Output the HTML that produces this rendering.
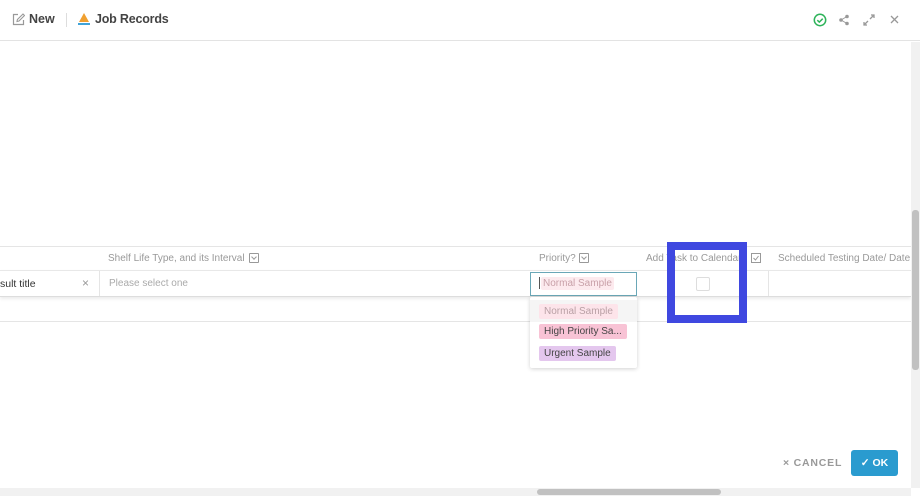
<!DOCTYPE html>
<html><head><style>
*{box-sizing:border-box;margin:0;padding:0}
body{width:920px;height:496px;background:#fff;font-family:"Liberation Sans",sans-serif;position:relative;overflow:hidden;color:#333}
.a{position:absolute}
.hdr{left:0;top:0;width:920px;height:41px;border-bottom:1px solid #e3e3e3;background:#fff}
.t{font-size:10px;color:#999;white-space:nowrap}
.tag{position:absolute;font-size:10.5px;padding:2px 5px;border-radius:2px;white-space:nowrap}
.dd{position:absolute;width:10px;height:10px;border:1px solid #999;border-radius:1px}
.dd:after{content:"";position:absolute;left:2px;top:1px;width:3px;height:3px;border-right:1px solid #999;border-bottom:1px solid #999;transform:rotate(45deg)}
</style></head><body>
<div class="a hdr"></div>
<svg class="a" style="left:12px;top:13px" width="13" height="13" viewBox="0 0 13 13"><path d="M6 1.5H1.5v10h10V7" fill="none" stroke="#999" stroke-width="1.2"/><path d="M5 8.5l.4-2L11 1l1.5 1.5L7 8z" fill="none" stroke="#999" stroke-width="1.1"/></svg>
<div class="a" style="left:29px;top:12px;font-size:12.5px;font-weight:bold;color:#444">New</div>
<div class="a" style="left:66px;top:13px;width:1px;height:14px;background:#ddd"></div>
<svg class="a" style="left:77px;top:12px" width="14" height="15" viewBox="0 0 14 15"><path d="M7 1L12 10H2z" fill="#f0a030"/><rect x="1" y="11" width="12" height="2" fill="#3fa3d8"/></svg>
<div class="a" style="left:95px;top:12px;font-size:12.5px;font-weight:bold;color:#444;letter-spacing:-.2px">Job Records</div>
<svg class="a" style="left:813px;top:13px" width="14" height="14" viewBox="0 0 14 14"><circle cx="7" cy="7" r="5.7" fill="none" stroke="#2eb35a" stroke-width="1.5"/><path d="M4.3 7.2l2 1.9 3.4-3.4" fill="none" stroke="#2eb35a" stroke-width="1.5"/></svg>
<svg class="a" style="left:838px;top:14px" width="12" height="12" viewBox="0 0 12 12"><circle cx="3" cy="6" r="1.8" fill="#999"/><circle cx="9" cy="2.5" r="1.8" fill="#999"/><circle cx="9" cy="9.5" r="1.8" fill="#999"/><path d="M3 6L9 2.5M3 6l6 3.5" stroke="#999"/></svg>
<svg class="a" style="left:863px;top:14px" width="12" height="12" viewBox="0 0 12 12"><path d="M7 5l4-4M8 1h3v3M5 7l-4 4M1 8v3h3" fill="none" stroke="#999" stroke-width="1.3"/></svg>
<svg class="a" style="left:890px;top:15px" width="9" height="9" viewBox="0 0 9 9"><path d="M1 1l7 7M8 1L1 8" stroke="#999" stroke-width="1.3"/></svg>
<div class="a" style="left:0;top:246px;width:911px;height:1px;background:#e5e5e5"></div>
<div class="a t" style="left:108px;top:253px">Shelf Life Type, and its Interval</div>
<div class="dd" style="left:249px;top:253px"></div>
<div class="a t" style="left:539px;top:253px">Priority?</div>
<div class="dd" style="left:579px;top:253px"></div>
<div class="a t" style="left:646px;top:253px">Add Task to Calendar</div>
<div class="a" style="left:751px;top:253px;width:10px;height:10px;border:1px solid #999"></div>
<svg class="a" style="left:752px;top:254px" width="8" height="8"><path d="M1.5 4l2 2 3-4" fill="none" stroke="#999"/></svg>
<div class="a t" style="left:778px;top:253px">Scheduled Testing Date/ Date</div>
<div class="a" style="left:0;top:270px;width:911px;height:27px;border-top:1px solid #e8e8e8;border-bottom:1px solid #ddd;box-shadow:0 2px 3px rgba(0,0,0,.08)"></div>
<div class="a" style="left:0;top:278px;font-size:10.5px;color:#333">sult title</div>
<div class="a" style="left:82px;top:276px;font-size:12px;color:#999">×</div>
<div class="a" style="left:99px;top:271px;width:1px;height:25px;background:#e5e5e5"></div>
<div class="a" style="left:109px;top:278px;font-size:10px;color:#aaa">Please select one</div>
<div class="a" style="left:768px;top:271px;width:1px;height:25px;background:#e5e5e5"></div>
<div class="a" style="left:530px;top:272px;width:107px;height:24px;border:1px solid #6aa7b7;background:#fff"></div>
<div class="a" style="left:539px;top:277px;width:1px;height:12px;background:#555"></div>
<div class="tag" style="left:541px;top:277px;background:#fdeaee;color:#c8a0a8;font-size:10px;padding:1px 2px">Normal Sample</div>
<div class="a" style="left:696px;top:277px;width:14px;height:14px;border:1px solid #ddd;border-radius:2px"></div>
<div class="a" style="left:0;top:321px;width:911px;height:1px;background:#e5e5e5"></div>
<div class="a" style="left:530px;top:297px;width:107px;height:71px;background:#fff;box-shadow:0 1px 4px rgba(0,0,0,.18);border-radius:2px"></div>
<div class="a" style="left:530px;top:300px;width:107px;height:22px;background:#f5f5f5"></div>
<div class="tag" style="left:539px;top:304px;background:#fde4ea;color:#b9a0a5;font-size:10px">Normal Sample</div>
<div class="tag" style="left:539px;top:324px;background:#f8c3d5;color:#444;font-size:10px">High Priority Sa...</div>
<div class="tag" style="left:539px;top:346px;background:#e4c7ee;color:#444;font-size:10px">Urgent Sample</div>
<div class="a" style="left:667px;top:242px;width:80px;height:81px;border:8px solid #3f48e0"></div>
<div class="a" style="left:783px;top:457px;font-size:10.5px;font-weight:bold;color:#999;letter-spacing:.8px">× CANCEL</div>
<div class="a" style="left:851px;top:450px;width:47px;height:26px;background:#2a9bcf;border-radius:3px;color:#fff;font-size:10.5px;font-weight:bold;text-align:center;line-height:26px">✓ OK</div>
<div class="a" style="left:911px;top:42px;width:9px;height:446px;background:#f1f1f1"></div>
<div class="a" style="left:912px;top:210px;width:7px;height:160px;background:#c1c1c1;border-radius:3px"></div>
<div class="a" style="left:0;top:488px;width:911px;height:8px;background:#f1f1f1"></div>
<div class="a" style="left:537px;top:489px;width:184px;height:6px;background:#c1c1c1;border-radius:3px"></div>
</body></html>
